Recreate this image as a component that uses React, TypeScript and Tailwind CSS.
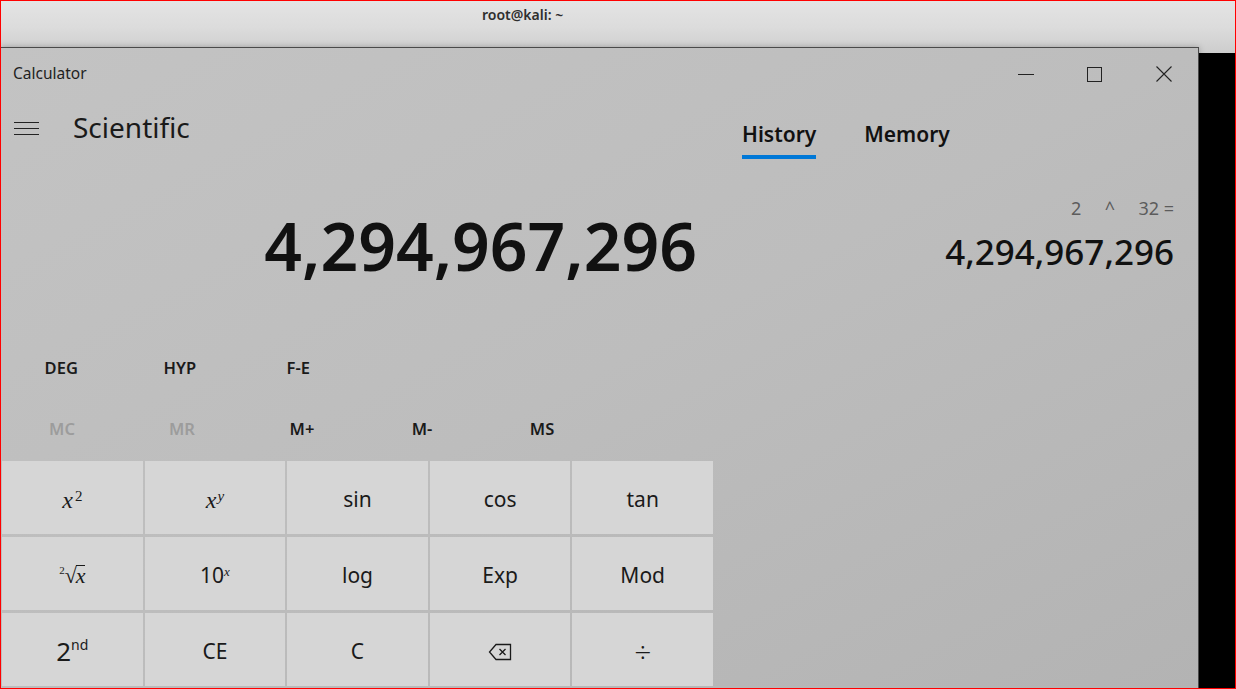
import React from "react";

const sans = { fontFamily: '"Noto Sans", "Open Sans", sans-serif' };
const serif = { fontFamily: '"Liberation Serif", serif' };

const X = () => <span className="italic" style={serif}>x</span>;

const Backspace = () => (
  <svg width="24" height="18" viewBox="0 0 24 18" fill="none" stroke="#1a1a1a" strokeWidth="1.3">
    <path d="M8 1.5 H22.5 V16.5 H8 L1.5 9 Z" strokeLinejoin="miter" />
    <path d="M11.5 6 L17.5 12 M17.5 6 L11.5 12" />
  </svg>
);

const keys: React.ReactNode[] = [
  <span className="text-[24px]"><X /><sup className="text-[15px] ml-[2px]" style={serif}>2</sup></span>,
  <span className="text-[24px]"><X /><sup className="text-[15px] italic ml-[1px]" style={serif}>y</sup></span>,
  "sin",
  "cos",
  "tan",
  <span className="text-[22px] inline-flex items-baseline" style={serif}>
    <sup className="text-[11px] relative -top-[9px]">2</sup>
    <span className="text-[22px]">√</span>
    <span className="italic border-t border-[#1a1a1a] leading-[20px] -ml-[1px]">x</span>
  </span>,
  <span>10<sup className="text-[13px] italic" style={serif}>x</sup></span>,
  "log",
  "Exp",
  "Mod",
  <span className="text-[26px]">2<sup className="text-[14px] relative -top-[11px]">nd</sup></span>,
  "CE",
  "C",
  <Backspace />,
  <span className="text-[30px] font-light leading-none">÷</span>,
];

export default function App() {
  return (
    <div className="w-[1236px] h-[689px] border border-[#ff0000] bg-black relative overflow-hidden" style={sans}>
      <div className="h-[52px] bg-linear-to-b from-[#e4e4e4] via-[#dcdcdc] to-[#cdcdcd] flex justify-start">
        <span className="ml-[481px] mt-[3px] text-[14px] font-semibold text-[#2e2e2e]">root@kali: ~</span>
      </div>

      <div className="absolute left-0 top-[46px] w-[1198px] h-[643px] border-t border-r border-[#4a4a4a] bg-linear-to-br from-[#c3c3c3] via-[#bdbdbd] to-[#b3b3b3] flex flex-col shadow-[0_0_6px_rgba(0,0,0,0.25)]">
        <div className="h-[52px] flex items-center shrink-0">
          <span className="ml-[12px] text-[15.5px] text-[#1f1f1f]">Calculator</span>
          <div className="ml-auto flex">
            <div className="w-[69px] h-[40px] flex items-center justify-center">
              <div className="w-[16px] h-px bg-[#222]" />
            </div>
            <div className="w-[69px] h-[40px] flex items-center justify-center">
              <div className="w-[15px] h-[15px] border border-[#222]" />
            </div>
            <div className="w-[69px] h-[40px] flex items-center justify-center">
              <svg width="16" height="16" viewBox="0 0 16 16" stroke="#222" strokeWidth="1.1">
                <path d="M0.5 0.5 L15.5 15.5 M15.5 0.5 L0.5 15.5" />
              </svg>
            </div>
          </div>
        </div>

        <div className="flex flex-1 min-h-0">
          <div className="w-[712px] shrink-0 flex flex-col">
            <div className="h-[56px] flex items-center">
              <div className="ml-[13px] w-[25px] flex flex-col gap-[5px]">
                <div className="h-px bg-[#222]" />
                <div className="h-px bg-[#222]" />
                <div className="h-px bg-[#222]" />
              </div>
              <span className="ml-[34px] -mt-[3px] text-[28px] leading-[56px] text-[#1a1a1a]">Scientific</span>
            </div>

            <div className="h-[182px] pt-[56px] pr-[16px] flex justify-end">
              <span className="text-[66px] leading-none font-semibold text-[#111]">4,294,967,296</span>
            </div>

            <div className="h-[60px] grid grid-cols-6 items-center text-[16.5px] font-semibold text-[#1a1a1a] ml-px">
              {["DEG", "HYP", "F-E"].map((t) => (
                <span key={t} className="text-center">{t}</span>
              ))}
            </div>

            <div className="h-[63px] flex items-center text-[16.5px] font-semibold ml-px">
              {["MC", "MR", "M+", "M-", "MS"].map((t, i) => (
                <span key={t} className={`w-[120px] text-center ${i < 2 ? "text-[#9c9c9c]" : "text-[#1a1a1a]"}`}>{t}</span>
              ))}
            </div>

            <div className="grid grid-cols-5 gap-x-[2px] gap-y-[3px] ml-px">
              {keys.map((k, i) => (
                <div
                  key={i}
                  className="h-[73px] pt-[4px] bg-[#d6d6d6] flex items-center justify-center text-[21px] text-[#1a1a1a]"
                >
                  {k}
                </div>
              ))}
            </div>
          </div>

          <div className="flex-1 flex flex-col">
            <div className="pl-[29px] pt-[20px] flex gap-[48px]">
              <div className="flex flex-col">
                <span className="text-[21px] leading-[28px] font-semibold text-[#111]">History</span>
                <div className="mt-[7px] h-[4px] bg-[#0078d7]" />
              </div>
              <span className="text-[21px] leading-[28px] font-semibold text-[#111]">Memory</span>
            </div>
            <div className="pr-[24px] flex flex-col items-end">
              <span className="mt-[37px] text-[18px] leading-[24px] text-[#5c5c5c] whitespace-pre">2     ^     32 =</span>
              <span className="mt-[12px] text-[35px] leading-[40px] font-medium text-[#111]">4,294,967,296</span>
            </div>
          </div>
        </div>
      </div>
    </div>
  );
}
